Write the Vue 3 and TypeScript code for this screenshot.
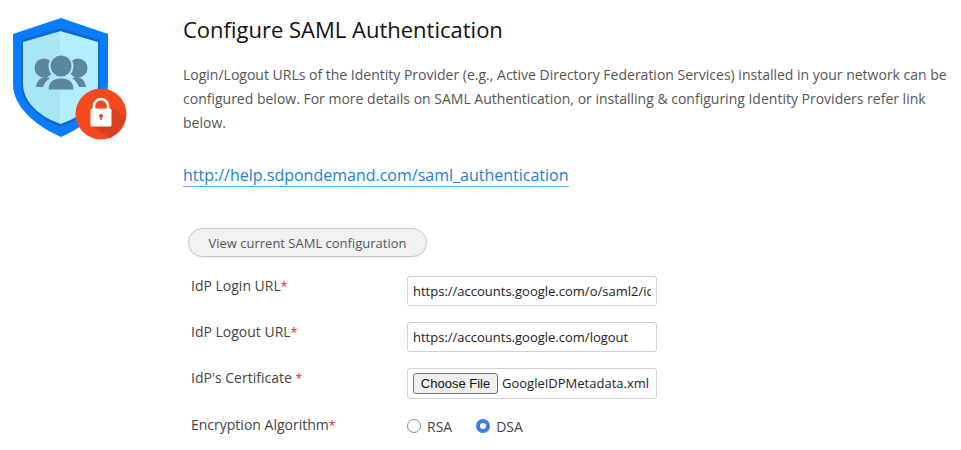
<script setup lang="ts">
import { ref } from 'vue'

const loginUrl = ref('https://accounts.google.com/o/saml2/idp?idpid=C01abc')
const logoutUrl = ref('https://accounts.google.com/logout')
const algorithm = ref('DSA')
</script>

<template>
  <div class="page">
    <div class="logo">
      <svg width="140" height="150" viewBox="0 0 140 150">
        <path d="M61 18 L108 34 V84 C108 108 84 127 61 137 C38 127 13 108 13 84 V34 Z" fill="#0a7cff" />
        <path d="M61 28 L100 40 V84 C100 104 80 120 61 127 C42 120 21 104 21 84 V40 Z" fill="#0f69c9" />
        <path d="M61 31 L23 42 V84 C23 103 42 118 61 124 Z" fill="#a9e6f4" />
        <path d="M60 31 L98 42 V84 C98 103 80 118 60 124 Z" fill="#b3eefe" />
        <g fill="#5b879c">
          <circle cx="44" cy="68" r="9.500" />
          <circle cx="78" cy="68" r="9.500" />
          <path d="M36 87 C37 80 41 77 46 77 L50 78 C46 81 44 84 43 87 Z" />
          <path d="M86 87 C85 80 81 77 76 77 L72 78 C76 81 78 84 79 87 Z" />
          <circle cx="61" cy="66" r="11.500" stroke="#aeeafa" stroke-width="2" />
          <path d="M48 90 C48 81 54 78 61 78 C68 78 74 81 74 90 Z" stroke="#aeeafa" stroke-width="1" />
        </g>
        <circle cx="101" cy="114" r="25.500" fill="#f4481f" />
        <path d="M91 125 L110 107 L126 117 C124 125 118 133 110 138 Z" fill="#d93f1c" />
        <path d="M94 110 V106 a7 7 0 0 1 14 0 V110" fill="none" stroke="#fff" stroke-width="2.600" />
        <rect x="90.500" y="108.500" width="21" height="18" rx="1.500" fill="#fff" />
        <circle cx="101" cy="116" r="2" fill="#e8471f" />
        <rect x="100.300" y="116" width="1.400" height="4" fill="#e8471f" />
      </svg>
    </div>

    <div class="content">
      <h1>Configure SAML Authentication</h1>
      <p class="intro">
        Login/Logout URLs of the Identity Provider (e.g., Active Directory Federation Services) installed in your network can be
        configured below. For more details on SAML Authentication, or installing &amp; configuring Identity Providers refer link
        below.
      </p>
      <a class="help" href="#">http://help.sdpondemand.com/saml_authentication</a>

      <button class="view-btn" type="button">View current SAML configuration</button>

      <div class="form">
        <label>IdP Login URL<em>*</em></label>
        <input v-model="loginUrl" class="field" type="text" />

        <label>IdP Logout URL<em>*</em></label>
        <input v-model="logoutUrl" class="field" type="text" />

        <label>IdP's Certificate <em>*</em></label>
        <div class="file">
          <button class="choose" type="button">Choose File</button>
          <span>GoogleIDPMetadata.xml</span>
        </div>

        <label>Encryption Algorithm<em>*</em></label>
        <div class="radios">
          <label class="radio"><input v-model="algorithm" type="radio" value="RSA" />RSA</label>
          <label class="radio"><input v-model="algorithm" type="radio" value="DSA" />DSA</label>
        </div>
      </div>
    </div>
  </div>
</template>

<style scoped>
.page {
  display: flex;
  width: 961px;
  height: 450px;
  overflow: hidden;
  font-family: "Open Sans", sans-serif;
  color: #555;
  background: #fff;
}

.logo {
  flex: 0 0 183px;
}

.logo svg {
  display: block;
}

.content {
  flex: 1;
  display: flex;
  flex-direction: column;
  align-items: flex-start;
  padding-top: 14px;
}

h1 {
  margin: 0;
  font-size: 22px;
  line-height: 30px;
  font-weight: 400;
  color: #111;
}

.intro {
  margin: 19px 0 0;
  width: 770px;
  font-size: 14px;
  line-height: 24px;
  color: #555;
}

.help {
  margin-top: 29px;
  font-size: 16px;
  line-height: 22px;
  color: #1d7fd1;
  text-decoration: none;
  border-bottom: 1px solid #5aaef0;
}

.view-btn {
  margin: 41px 0 0 5px;
  width: 239px;
  height: 29px;
  padding: 0;
  font-family: inherit;
  font-size: 13px;
  color: #555;
  background: #f2f2f2;
  border: 1px solid #c8c8c8;
  border-radius: 15px;
  box-shadow: 0 1px 1px rgba(0, 0, 0, 0.08);
}

.form {
  margin: 19px 0 0 8px;
  display: grid;
  grid-template-columns: 216px 250px;
  grid-auto-rows: 30px;
  row-gap: 16px;
  align-items: center;
}

.form > label {
  font-size: 14px;
  color: #444;
  margin-top: -12px;
}

.form > label:nth-last-of-type(1) {
  margin-top: -10px;
}

em {
  font-style: normal;
  font-size: 12px;
  color: #f01c1c;
}

.field,
.file {
  box-sizing: border-box;
  width: 250px;
  height: 30px;
  border: 1px solid #ccd3d8;
  border-radius: 3px;
  background: #fff;
}

.field {
  padding: 0 5px;
  font-family: "Open Sans", sans-serif;
  font-size: 13px;
  color: #222;
  outline: none;
}

.file {
  display: flex;
  align-items: center;
  height: 31px;
  padding-left: 5px;
  font-size: 13px;
  color: #222;
  white-space: nowrap;
}

.choose {
  width: 85px;
  height: 21px;
  margin-right: 4px;
  padding: 0;
  font-family: "Liberation Sans", Arial, sans-serif;
  font-size: 13px;
  color: #111;
  background: #efefef;
  border: 1px solid #767676;
  border-radius: 3px;
}

.radios {
  display: flex;
  gap: 24px;
  margin-top: -6px;
}

.radio {
  display: flex;
  align-items: center;
  gap: 6px;
  font-size: 14px;
  color: #444;
}

.radio input {
  appearance: none;
  box-sizing: border-box;
  width: 14px;
  height: 14px;
  margin: 0;
  border: 1px solid #8c8c8c;
  border-radius: 50%;
  background: #fff;
}

.radio input:checked {
  border: 4.500px solid #3b7de8;
  background: #fff;
}
</style>
